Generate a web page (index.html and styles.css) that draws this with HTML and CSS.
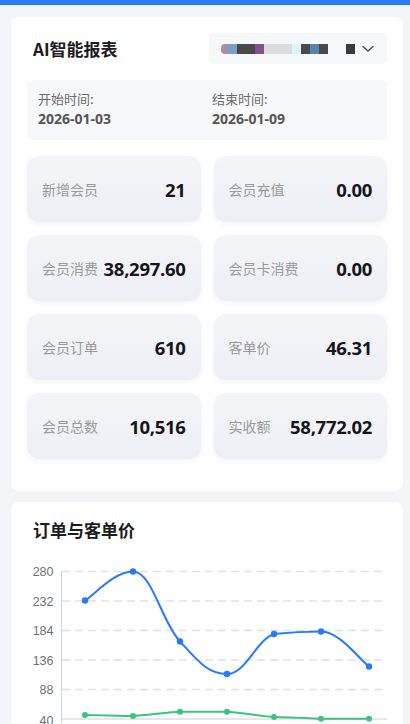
FILE: index.html
```html
<!DOCTYPE html>
<html lang="zh">
<head>
<meta charset="utf-8">
<title>AI智能报表</title>
<link rel="stylesheet" href="styles.css">
</head>
<body>
<div class="topbar"></div>
<main class="page">
  <section class="card">
    <div class="header">
      <h1 class="title">AI智能报表</h1>
      <div class="select">
        <span class="blk b-pink"></span>
        <span class="blk b-blue"></span>
        <span class="blk b-dark w2"></span>
        <span class="blk b-purple"></span>
        <span class="blk b-light w3"></span>
        <span class="blk b-cyan"></span>
        <span class="blk b-dark"></span>
        <span class="blk b-steel"></span>
        <span class="blk b-dark"></span>
        <span class="blk b-gap w2"></span>
        <span class="blk b-ink"></span>
        <svg class="chev" width="12" height="8" viewBox="0 0 12 8"><path d="M1 1.5 L6 6 L11 1.5" fill="none" stroke="#4a4f59" stroke-width="1.5" stroke-linecap="round" stroke-linejoin="round"/></svg>
      </div>
    </div>
    <div class="dates">
      <div class="date">
        <div class="date-label">开始时间:</div>
        <div class="date-value">2026-01-03</div>
      </div>
      <div class="date">
        <div class="date-label">结束时间:</div>
        <div class="date-value">2026-01-09</div>
      </div>
    </div>
    <div class="stats">
      <div class="stat"><span class="stat-label">新增会员</span><span class="stat-value">21</span></div>
      <div class="stat"><span class="stat-label">会员充值</span><span class="stat-value">0.00</span></div>
      <div class="stat"><span class="stat-label">会员消费</span><span class="stat-value">38,297.60</span></div>
      <div class="stat"><span class="stat-label">会员卡消费</span><span class="stat-value">0.00</span></div>
      <div class="stat"><span class="stat-label">会员订单</span><span class="stat-value">610</span></div>
      <div class="stat"><span class="stat-label">客单价</span><span class="stat-value">46.31</span></div>
      <div class="stat"><span class="stat-label">会员总数</span><span class="stat-value">10,516</span></div>
      <div class="stat"><span class="stat-label">实收额</span><span class="stat-value">58,772.02</span></div>
    </div>
  </section>

  <section class="card card-chart">
    <h2 class="title">订单与客单价</h2>
    <svg class="chart" width="392" height="175" viewBox="11 555 392 175">
      <g class="grid" stroke="#e0e1e4" stroke-width="1.5" stroke-dasharray="8 5">
        <line x1="62" y1="572.5" x2="387" y2="572.5"/>
        <line x1="62" y1="602" x2="387" y2="602"/>
        <line x1="62" y1="631.5" x2="387" y2="631.5"/>
        <line x1="62" y1="661" x2="387" y2="661"/>
        <line x1="62" y1="690.5" x2="387" y2="690.5"/>
      </g>
      <line x1="62" y1="720" x2="387" y2="720" stroke="#cfd0d4" stroke-width="1"/>
      <line x1="61.5" y1="572" x2="61.5" y2="724" stroke="#d4d5d8" stroke-width="1"/>
      <g class="ylabels" font-size="12.5" fill="#6e7079" text-anchor="end">
        <text x="53.5" y="577">280</text>
        <text x="53.5" y="606.5">232</text>
        <text x="53.5" y="636">184</text>
        <text x="53.5" y="665.5">136</text>
        <text x="53.5" y="695">88</text>
        <text x="53.5" y="725.5">40</text>
      </g>
      <path d="M85,601.5 C94.6,595.7 114,572.5 133,572.5 C152,572.5 161.2,622 180,642.5 C198.8,663 208,675 227,675 C246,675 256,641 274,635 C288,633.5 305,632.5 321,632.5 C340,632.5 359.4,660.5 369,667.5" fill="none" stroke="#2a7af8" stroke-width="2"/>
      <g fill="#2a7af8">
        <circle cx="85" cy="601.5" r="3.2"/>
        <circle cx="133" cy="572.5" r="3.2"/>
        <circle cx="180" cy="642.5" r="3.2"/>
        <circle cx="227" cy="675" r="3.2"/>
        <circle cx="274" cy="635" r="3.2"/>
        <circle cx="321" cy="632.5" r="3.2"/>
        <circle cx="369" cy="667.5" r="3.2"/>
      </g>
      <path d="M85,716 C94.6,716 123.4,717 133,717 C142.4,717 170.6,712.7 180,712.7 C189.4,712.7 217.6,712.7 227,712.7 C236.4,712.7 264.6,718 274,718 C283.4,718 311.6,719.7 321,719.7 L369,719.7" fill="none" stroke="#3cc47f" stroke-width="2"/>
      <g fill="#3cc47f">
        <circle cx="85" cy="716" r="3"/>
        <circle cx="133" cy="717" r="3"/>
        <circle cx="180" cy="712.7" r="3"/>
        <circle cx="227" cy="712.7" r="3"/>
        <circle cx="274" cy="718" r="3"/>
        <circle cx="321" cy="719.7" r="3"/>
        <circle cx="369" cy="719.7" r="3"/>
      </g>
    </svg>
  </section>
</main>
</body>
</html>
```

FILE: styles.css
```css
* { box-sizing: border-box; }

html, body {
  margin: 0;
  padding: 0;
}

body {
  background: #f4f5f9;
  font-family: "Open Sans", "Noto Sans CJK SC", sans-serif;
  color: #222;
  overflow: hidden;
}

.topbar {
  height: 5px;
  background: #2a7afa;
}

.page {
  padding: 12px 7px 0 11px;
}

.card {
  background: #fff;
  border-radius: 8px;
  padding: 16px 16px 32px;
}

.card-chart {
  margin-top: 11px;
  padding: 16px 0 0;
}

.header {
  display: flex;
  align-items: center;
  justify-content: space-between;
  height: 31px;
}

.title {
  margin: 0;
  padding-left: 6px;
  font-size: 17px;
  font-weight: 700;
  color: #1c1c1f;
  line-height: 24px;
  font-family: "Noto Sans CJK SC", "Open Sans", sans-serif;
}

.card-chart .title {
  padding-left: 22px;
}

.select {
  width: 178px;
  height: 31px;
  background: #f7f8fa;
  border-radius: 5px;
  display: flex;
  align-items: center;
  padding: 0 13px 0 12px;
}

.blk {
  display: block;
  width: 9px;
  height: 10px;
  flex: none;
}
.blk.w2 { width: 18px; }
.blk.w3 { width: 28px; }
.b-pink { background: #ab8ca6; width: 7px; border-radius: 4px 0 0 4px; }
.b-blue { background: #78a0c9; }
.b-dark { background: #4a4a4a; }
.b-purple { background: #854f8b; }
.b-light { background: #dcdcdf; }
.b-cyan { background: #dcf7f8; }
.b-steel { background: #5584b1; }
.b-gap { background: transparent; }
.b-ink { background: #363a42; }

.chev {
  margin-left: auto;
  display: block;
}

.dates {
  margin-top: 16px;
  background: #f7f8fa;
  border-radius: 6px;
  height: 60px;
  padding: 10px 11px 0;
  display: grid;
  grid-template-columns: 1fr 1fr;
  column-gap: 10px;
}

.date-label {
  font-size: 13px;
  color: #6a6a6a;
  line-height: 18px;
  font-family: "Noto Sans CJK SC", sans-serif;
}

.date-value {
  font-size: 14px;
  font-weight: 700;
  color: #555;
  line-height: 20px;
  margin-top: 1px;
}

.stats {
  margin-top: 16px;
  display: grid;
  grid-template-columns: 1fr 1fr;
  column-gap: 13px;
  row-gap: 13px;
}

.stat {
  height: 66px;
  border-radius: 12px;
  background: linear-gradient(180deg, #f4f5f9 0%, #eeeff4 100%);
  box-shadow: 0 2px 5px rgba(30, 40, 80, 0.05);
  display: flex;
  align-items: center;
  justify-content: space-between;
  padding: 0 15px;
}

.stat-label {
  font-size: 14px;
  color: #9a9a9a;
  font-family: "Noto Sans CJK SC", sans-serif;
  white-space: nowrap;
}

.stat-value {
  font-size: 18.5px;
  font-weight: 700;
  color: #16161a;
  letter-spacing: -0.3px;
}

.chart {
  display: block;
  margin-top: 12px;
}

.ylabels {
  font-family: "Liberation Sans", Arial, sans-serif;
}
```
